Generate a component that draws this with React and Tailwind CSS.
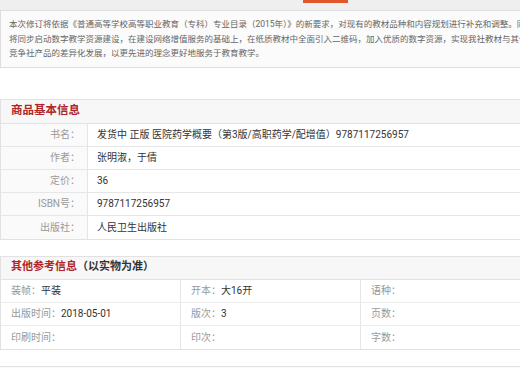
const basicInfo = [
  { label: '书名：', value: '发货中 正版 医院药学概要（第3版/高职药学/配增值）9787117256957' },
  { label: '作者：', value: '张明淑，于倩' },
  { label: '定价：', value: '36' },
  { label: 'ISBN号：', value: '9787117256957' },
  { label: '出版社：', value: '人民卫生出版社' },
]

const otherInfo = [
  [
    { label: '装帧：', value: '平装' },
    { label: '开本：', value: '大16开' },
    { label: '语种：', value: '' },
  ],
  [
    { label: '出版时间：', value: '2018-05-01' },
    { label: '版次：', value: '3' },
    { label: '页数：', value: '' },
  ],
  [
    { label: '印刷时间：', value: '' },
    { label: '印次：', value: '' },
    { label: '字数：', value: '' },
  ],
]

function App() {
  return (
    <div
      className="w-[520px] h-[368px] overflow-hidden bg-white"
      style={{ fontFamily: 'Roboto, "Noto Sans CJK SC", sans-serif' }}
    >
      {/* Top strip with the tab edge */}
      <div className="h-[10px] bg-[#efefef]">
        <div className="ml-[303px] w-[45px] h-[3px] bg-[#e2562b]" />
      </div>

      {/* Intro text */}
      <div className="w-[540px] border-y border-l border-[#dedede] bg-[#fbfbfb] px-2 py-[6px] text-[8.5px] leading-[14.5px] text-[#666]">
        <p className="whitespace-nowrap">本次修订将依据《普通高等学校高等职业教育（专科）专业目录（2015年）》的新要求，对现有的教材品种和内容规划进行补充和调整。同时</p>
        <p className="whitespace-nowrap">将同步启动数字教学资源建设，在建设网络增值服务的基础上，在纸质教材中全面引入二维码，加入优质的数字资源，实现我社教材与其他</p>
        <p className="whitespace-nowrap">竞争社产品的差异化发展，以更先进的理念更好地服务于教育教学。</p>
      </div>

      {/* 商品基本信息 */}
      <div className="mt-[31px] border-y border-l border-[#e2e2e2]">
        <div className="h-[24px] flex items-center px-[10px] bg-[#f7f7f7] border-b border-[#e2e2e2] text-[11.5px] font-bold text-[#b0262a]">
          商品基本信息
        </div>
        {basicInfo.map((row, i) => (
          <div
            key={row.label}
            className={`grid grid-cols-[87px_1fr] h-[23px] ${i < basicInfo.length - 1 ? 'border-b border-[#e6e6e6]' : ''}`}
          >
            <div className="flex items-center justify-end pr-[7px] bg-[#fafafa] border-r border-[#e6e6e6] text-[10px] text-[#999]">
              {row.label}
            </div>
            <div className="flex items-center pl-[9px] text-[10px] text-[#333]">{row.value}</div>
          </div>
        ))}
      </div>

      {/* 其他参考信息 */}
      <div className="mt-[16px] border-y border-l border-[#e2e2e2]">
        <div className="h-[23px] flex items-center px-[10px] bg-[#f7f7f7] border-b border-[#e2e2e2] text-[11px] font-bold">
          <span className="text-[#b0262a]">其他参考信息</span>
          <span className="text-[#333]">（以实物为准）</span>
        </div>
        {otherInfo.map((row, i) => (
          <div
            key={i}
            className={`grid grid-cols-[180px_180px_1fr] h-[23px] ${i < otherInfo.length - 1 ? 'border-b border-[#ececec]' : ''}`}
          >
            {row.map((cell, j) => (
              <div
                key={cell.label}
                className={`flex items-center px-[10px] text-[10px] ${j < 2 ? 'border-r border-[#e6e6e6]' : ''}`}
              >
                <span className="text-[#999]">{cell.label}</span>
                <span className="text-[#333]">{cell.value}</span>
              </div>
            ))}
          </div>
        ))}
      </div>

      <div className="mt-[16px] border-t border-[#e2e2e2] h-[20px] bg-[#fafafa]" />
    </div>
  )
}

export default App
